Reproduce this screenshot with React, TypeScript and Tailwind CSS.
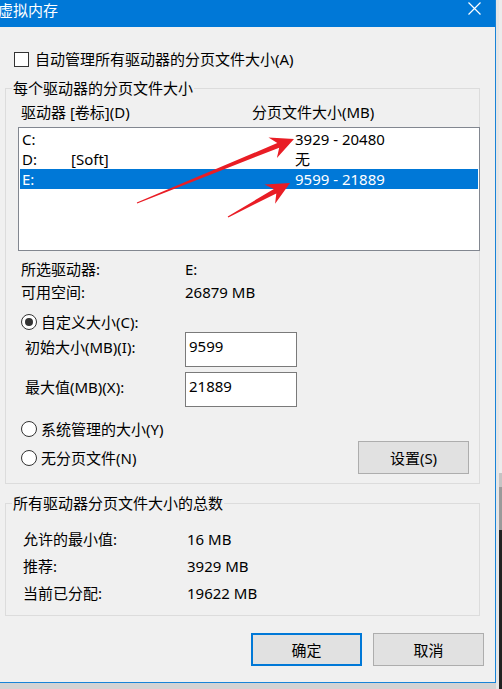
import React from "react";

type Pt = [number, number];

// builds a tapered arrow polygon from tail to tip
const arrowPoints = (tail: Pt, tip: Pt, headLen = 23, headHalf = 11, shaft = 5, notch = 6) => {
  const dx = tip[0] - tail[0];
  const dy = tip[1] - tail[1];
  const len = Math.hypot(dx, dy);
  const ux = dx / len;
  const uy = dy / len;
  const nx = -uy;
  const ny = ux;
  const bx = tip[0] - headLen * ux;
  const by = tip[1] - headLen * uy;
  const jx = tip[0] - (headLen - notch) * ux;
  const jy = tip[1] - (headLen - notch) * uy;
  const pts: Pt[] = [
    [tail[0] + 0.6 * nx, tail[1] + 0.6 * ny],
    [jx + (shaft / 2) * nx, jy + (shaft / 2) * ny],
    [bx + headHalf * nx, by + headHalf * ny],
    tip,
    [bx - headHalf * nx, by - headHalf * ny],
    [jx - (shaft / 2) * nx, jy - (shaft / 2) * ny],
    [tail[0] - 0.6 * nx, tail[1] - 0.6 * ny],
  ];
  return pts.map((p) => `${p[0].toFixed(1)},${p[1].toFixed(1)}`).join(" ");
};

const Radio = ({ checked = false }: { checked?: boolean }) => (
  <span className="w-[16px] h-[16px] rounded-full border border-[#333333] bg-white flex items-center justify-center shrink-0">
    {checked && <span className="w-[8px] h-[8px] rounded-full bg-[#333333]" />}
  </span>
);

const Legend = ({ text }: { text: string }) => (
  <span className="absolute left-[6px] -top-[11px] px-px bg-[#f0f0f0] leading-[20px]">{text}</span>
);

const drives = [
  { drive: "C:", label: "", size: "3929 - 20480", selected: false },
  { drive: "D:", label: "[Soft]", size: "无", selected: false },
  { drive: "E:", label: "", size: "9599 - 21889", selected: true },
];

export default function App() {
  return (
    <div className="relative w-[502px] h-[689px] overflow-hidden bg-[#d3d3d3] font-['Noto_Sans','Noto_Sans_CJK_SC',sans-serif] text-[15px] leading-[20px] text-black">
      <div className="flex">
        <div className="w-[496px] h-[683px] flex flex-col bg-[#f0f0f0] border-r border-b border-[#1883d7]">
          {/* Title bar */}
          <div className="h-[27px] shrink-0 bg-[#0078d7] flex items-start justify-between text-white">
            <span className="-ml-[2px] leading-[20px]">虚拟内存</span>
            <svg className="mt-[2px] mr-[14px]" width="13" height="13" viewBox="0 0 13 13">
              <path d="M0.5 0.5 L12.5 12.5 M12.5 0.5 L0.5 12.5" stroke="white" strokeWidth="1.2" fill="none" />
            </svg>
          </div>

          {/* Auto manage */}
          <div className="mt-[24px] h-[16px] pl-[14px] flex items-center gap-[6px]">
            <span className="w-[15px] h-[15px] border border-[#333333] bg-white shrink-0" />
            <span>自动管理所有驱动器的分页文件大小(A)</span>
          </div>

          {/* Per drive group */}
          <div className="relative mt-[21px] ml-[5px] w-[475px] h-[396px] shrink-0 border border-[#dcdcdc] flex flex-col">
            <Legend text="每个驱动器的分页文件大小" />
            <div className="mt-[13px] h-[20px] flex items-center pl-[15px]">
              <span className="w-[231px]">驱动器 [卷标](D)</span>
              <span>分页文件大小(MB)</span>
            </div>
            <div className="mt-[5px] ml-[12px] w-[462px] h-[124px] shrink-0 border border-[#828790] bg-white p-px">
              {drives.map((d) => (
                <div
                  key={d.drive}
                  className={`h-[20px] flex items-center pl-[2px] ${d.selected ? "bg-[#0078d7] text-white" : ""}`}
                >
                  <span className="w-[49px]">{d.drive}</span>
                  <span className="w-[224px]">{d.label}</span>
                  <span>{d.size}</span>
                </div>
              ))}
            </div>
            <div className="mt-[6px] h-[23px] flex items-center pl-[15px]">
              <span className="w-[164px]">所选驱动器:</span>
              <span>E:</span>
            </div>
            <div className="h-[23px] flex items-center pl-[15px]">
              <span className="w-[164px]">可用空间:</span>
              <span>26879 MB</span>
            </div>
            <div className="mt-[9px] h-[20px] flex items-center pl-[15px] gap-[4px]">
              <Radio checked />
              <span>自定义大小(C):</span>
            </div>
            <div className="h-[35px] flex items-start pl-[19px]">
              <span className="w-[160px] pt-[5px]">初始大小(MB)(I):</span>
              <div className="w-[112px] h-[35px] border border-[#7a7a7a] bg-white pl-[3px] pt-[3px]">9599</div>
            </div>
            <div className="mt-[5px] h-[35px] flex items-start pl-[19px]">
              <span className="w-[160px] pt-[5px]">最大值(MB)(X):</span>
              <div className="w-[112px] h-[35px] border border-[#7a7a7a] bg-white pl-[3px] pt-[3px]">21889</div>
            </div>
            <div className="mt-[12px] h-[20px] flex items-center pl-[15px] gap-[4px]">
              <Radio />
              <span>系统管理的大小(Y)</span>
            </div>
            <div className="mt-[2px] h-[33px] flex items-center justify-between pl-[15px] pr-[10px]">
              <div className="flex items-center gap-[4px]">
                <Radio />
                <span>无分页文件(N)</span>
              </div>
              <button className="w-[111px] h-[33px] border border-[#adadad] bg-[#e1e1e1] flex items-center justify-center">
                设置(S)
              </button>
            </div>
          </div>

          {/* Totals group */}
          <div className="relative mt-[19px] ml-[5px] w-[475px] h-[113px] shrink-0 border border-[#dcdcdc] flex flex-col">
            <Legend text="所有驱动器分页文件大小的总数" />
            <div className="mt-[21px] h-[27px] flex items-center pl-[17px]">
              <span className="w-[164px]">允许的最小值:</span>
              <span>16 MB</span>
            </div>
            <div className="h-[27px] flex items-center pl-[17px]">
              <span className="w-[164px]">推荐:</span>
              <span>3929 MB</span>
            </div>
            <div className="h-[27px] flex items-center pl-[17px]">
              <span className="w-[164px]">当前已分配:</span>
              <span>19622 MB</span>
            </div>
          </div>

          {/* Dialog buttons */}
          <div className="mt-[17px] flex justify-end gap-[11px] pr-[11px]">
            <button className="w-[111px] h-[33px] border-2 border-[#0078d7] bg-[#e1e1e1] flex items-center justify-center">
              确定
            </button>
            <button className="w-[111px] h-[33px] border border-[#adadad] bg-[#e1e1e1] flex items-center justify-center">
              取消
            </button>
          </div>
        </div>

        {/* window behind, right edge */}
        <div className="w-[6px] h-[689px] flex">
          <div className="w-[3px] bg-[#e6e6e6]" />
          <div className="w-[3px] flex flex-col">
            <div className="h-[473px] bg-[#ececec]" />
            <div className="h-[14px] bg-[#c4c4c4]" />
            <div className="h-[43px] bg-[#9a9a9a]" />
            <div className="flex-1 bg-[#222222]" />
          </div>
        </div>
      </div>

      {/* window behind, bottom buttons peeking */}
      <div className="flex gap-[11px] pl-[136px] pt-[3px]">
        <div className="w-[111px] h-[3px] border-t border-x border-[#a0a0a0] bg-[#e1e1e1]" />
        <div className="w-[111px] h-[3px] border-t border-x border-[#a0a0a0] bg-[#e1e1e1]" />
        <div className="w-[111px] h-[3px] border-t border-x border-[#a0a0a0] bg-[#c8c8c8]" />
      </div>

      {/* annotation arrows */}
      <svg className="absolute left-0 top-0 pointer-events-none" width="502" height="689">
        <polygon points={arrowPoints([137, 203], [294, 139])} fill="#e91d25" />
        <polygon points={arrowPoints([228, 217], [290, 183])} fill="#e91d25" />
      </svg>
    </div>
  );
}
